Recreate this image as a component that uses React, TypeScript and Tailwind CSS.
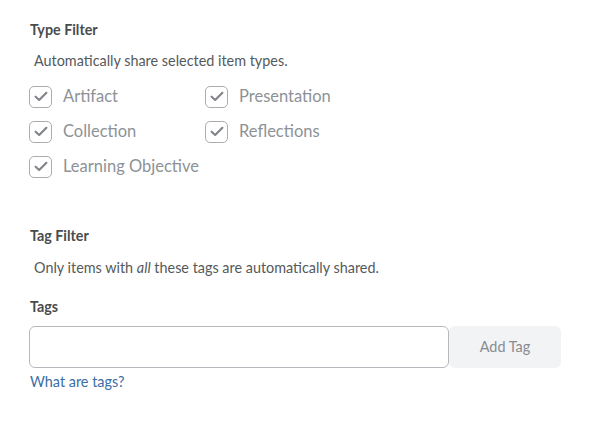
import React from 'react';

const types = [
  ['Artifact', 'Presentation'],
  ['Collection', 'Reflections'],
  ['Learning Objective'],
];

const CheckItem: React.FC<{ label: string }> = ({ label }) => (
  <label className="flex items-center h-[35px]">
    <span className="w-[23px] h-[22px] rounded-[5px] border border-[#a9adb1] bg-white flex items-center justify-center">
      <svg width="14" height="11" viewBox="0 0 13 10" fill="none">
        <path d="M1.5 5.2 L4.8 8.2 L11.5 1.6" stroke="#80848a" strokeWidth="2" strokeLinecap="round" strokeLinejoin="round" />
      </svg>
    </span>
    <span className="ml-[11px] text-[16.5px] text-[#8d9297]">{label}</span>
  </label>
);

const App: React.FC = () => {
  return (
    <div className="w-[592px] h-[426px] bg-white pl-[30px] pt-[21px] font-['Lato',sans-serif] text-[#494c4e]">
      <h3 className="text-[14.3px] font-bold leading-[18px]">Type Filter</h3>
      <p className="mt-[13px] ml-[4px] text-[14.4px] leading-[18px] text-[#565a5c]">Automatically share selected item types.</p>

      <div className="mt-[9px] -ml-[1px]">
        {types.map((row, i) => (
          <div key={i} className="grid grid-cols-[176px_1fr]">
            {row.map((t) => (
              <CheckItem key={t} label={t} />
            ))}
          </div>
        ))}
      </div>

      <h3 className="mt-[43px] text-[14.3px] font-bold leading-[18px]">Tag Filter</h3>
      <p className="mt-[14px] ml-[4px] text-[14.4px] leading-[18px] text-[#565a5c]">
        Only items with <i>all</i> these tags are automatically shared.
      </p>

      <h4 className="mt-[21px] text-[14.3px] font-bold leading-[18px]">Tags</h4>
      <div className="mt-[10px] -ml-[1px] flex w-[532px]">
        <input
          type="text"
          className="w-[420px] h-[42px] rounded-[6px] border border-[#b5b9bd] bg-white px-3 outline-none"
        />
        <button className="w-[112px] h-[42px] rounded-[6px] bg-[#f1f3f5] text-[14.4px] text-[#888c91]">Add Tag</button>
      </div>
      <a href="#" className="block mt-[5px] text-[14.4px] leading-[18px] text-[#3a6ea5]">What are tags?</a>
    </div>
  );
};

export default App;
